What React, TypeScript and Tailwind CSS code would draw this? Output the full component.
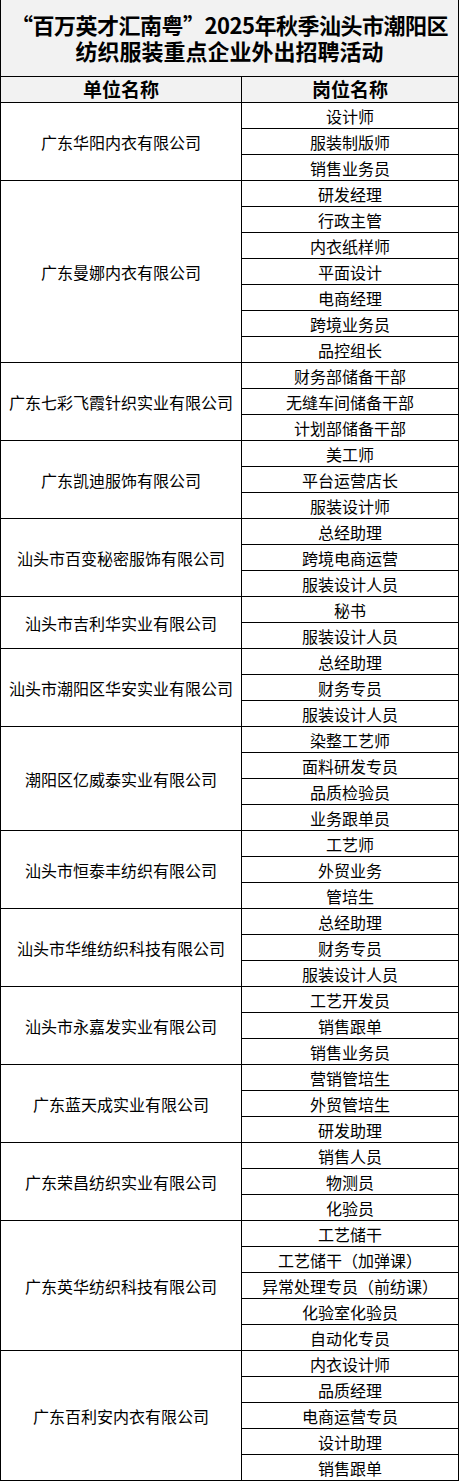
const groups: { company: string; jobs: string[] }[] = [
  { company: '广东华阳内衣有限公司', jobs: ['设计师', '服装制版师', '销售业务员'] },
  {
    company: '广东曼娜内衣有限公司',
    jobs: ['研发经理', '行政主管', '内衣纸样师', '平面设计', '电商经理', '跨境业务员', '品控组长']
  },
  {
    company: '广东七彩飞霞针织实业有限公司',
    jobs: ['财务部储备干部', '无缝车间储备干部', '计划部储备干部']
  },
  { company: '广东凯迪服饰有限公司', jobs: ['美工师', '平台运营店长', '服装设计师'] },
  { company: '汕头市百变秘密服饰有限公司', jobs: ['总经助理', '跨境电商运营', '服装设计人员'] },
  { company: '汕头市吉利华实业有限公司', jobs: ['秘书', '服装设计人员'] },
  { company: '汕头市潮阳区华安实业有限公司', jobs: ['总经助理', '财务专员', '服装设计人员'] },
  {
    company: '潮阳区亿威泰实业有限公司',
    jobs: ['染整工艺师', '面料研发专员', '品质检验员', '业务跟单员']
  },
  { company: '汕头市恒泰丰纺织有限公司', jobs: ['工艺师', '外贸业务', '管培生'] },
  { company: '汕头市华维纺织科技有限公司', jobs: ['总经助理', '财务专员', '服装设计人员'] },
  { company: '汕头市永嘉发实业有限公司', jobs: ['工艺开发员', '销售跟单', '销售业务员'] },
  { company: '广东蓝天成实业有限公司', jobs: ['营销管培生', '外贸管培生', '研发助理'] },
  { company: '广东荣昌纺织实业有限公司', jobs: ['销售人员', '物测员', '化验员'] },
  {
    company: '广东英华纺织科技有限公司',
    jobs: ['工艺储干', '工艺储干（加弹课）', '异常处理专员（前纺课）', '化验室化验员', '自动化专员']
  },
  {
    company: '广东百利安内衣有限公司',
    jobs: ['内衣设计师', '品质经理', '电商运营专员', '设计助理', '销售跟单']
  }
]

export default function App(): React.ReactNode {
  return (
    <div className="min-h-[1481px] bg-white">
      <div
        className="w-[459px] text-black"
        style={{ fontFamily: '"Noto Sans CJK SC", "Noto Sans", sans-serif' }}
      >
        <div className="flex h-[77px] flex-col items-center justify-center border-x border-b border-black bg-[#f2f2f2] pb-[2px] text-[22px] font-bold leading-[26px]">
          <div className="whitespace-nowrap tracking-[-0.5px]">“百万英才汇南粤”2025年秋季汕头市潮阳区</div>
          <div className="whitespace-nowrap">纺织服装重点企业外出招聘活动</div>
        </div>

        <div className="flex h-[26px] bg-[#f2f2f2] text-[19px] font-bold">
          <div className="flex w-[242px] items-center justify-center border-x border-b border-black">
            单位名称
          </div>
          <div className="flex w-[217px] items-center justify-center border-r border-b border-black">
            岗位名称
          </div>
        </div>

        {groups.map((group) => (
          <div key={group.company} className="flex text-[16px]">
            <div className="flex w-[242px] items-center justify-center whitespace-nowrap border-x border-b border-black">
              {group.company}
            </div>
            <div className="flex w-[217px] flex-col">
              {group.jobs.map((job) => (
                <div
                  key={job}
                  className="flex h-[26px] items-center justify-center whitespace-nowrap border-r border-b border-black"
                >
                  {job}
                </div>
              ))}
            </div>
          </div>
        ))}
      </div>
    </div>
  )
}
